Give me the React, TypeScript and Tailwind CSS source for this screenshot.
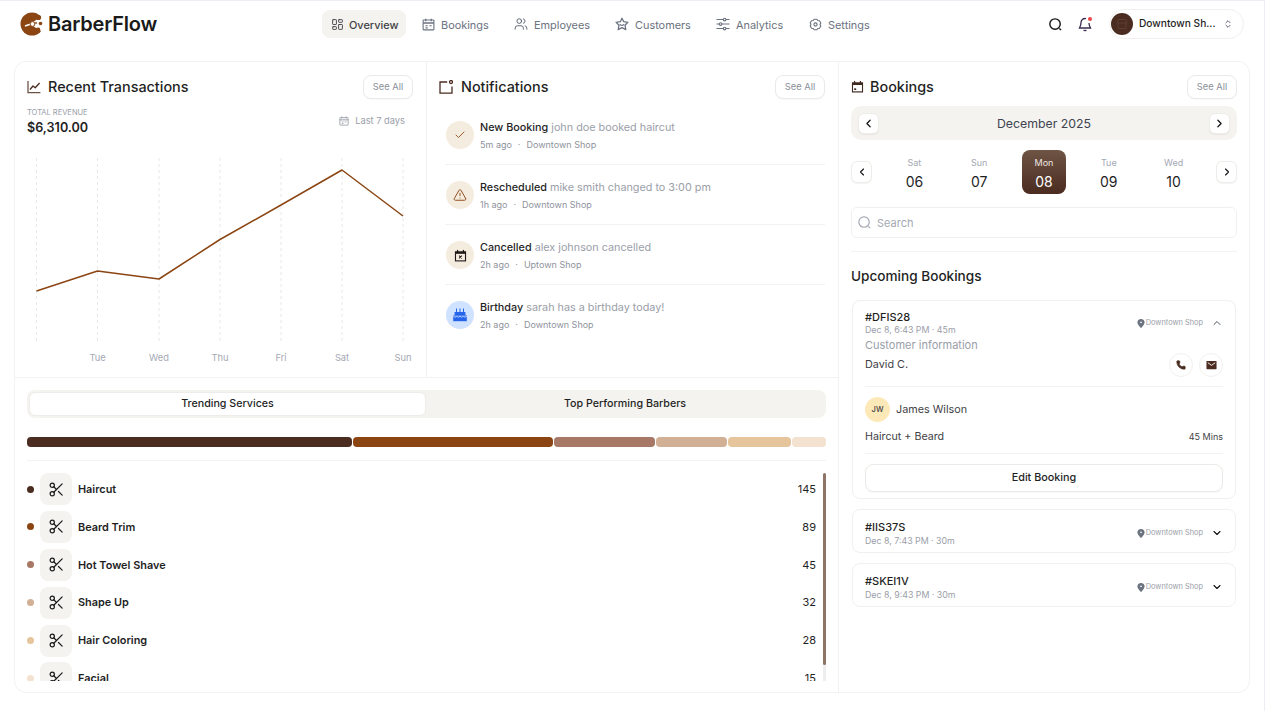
import { Check, ChevronDown, ChevronLeft, ChevronRight, ChevronUp, ChevronsUpDown, LayoutDashboard, Phone, Scissors, TriangleAlert, Users } from "lucide-react";
import type { ReactNode } from "react";

const font = { fontFamily: "Inter, 'Liberation Sans', sans-serif" };

function Logo() {
  return (
    <svg width="24" height="24" viewBox="0 0 24 24">
      <circle cx="12" cy="12" r="11.5" fill="#8b4513" />
      <path d="M24 3 L16 8 L10 12 L16 16 L24 21 Z" fill="#fff" />
      <path d="M5 14 L11 12" stroke="#fff" strokeWidth="1.6" />
      <circle cx="12.5" cy="12" r="2.4" fill="#fff" stroke="#8b4513" strokeWidth="1" />
      <circle cx="18.5" cy="5.5" r="2.6" fill="#8b4513" />
      <circle cx="20.5" cy="11.5" r="1.8" fill="#8b4513" />
      <circle cx="18" cy="18" r="2.4" fill="#8b4513" />
      <circle cx="16" cy="11" r="0.9" fill="#8b4513" />
    </svg>
  );
}

function SearchGlyph({ size = 13, width = 1.3 }: { size?: number; width?: number }) {
  return (
    <svg width={size} height={size} viewBox="0 0 14 14" fill="none" stroke="currentColor" strokeWidth={width} className="shrink-0">
      <circle cx="6.5" cy="6.5" r="5.6" />
      <path d="M11.2 11.2 12.9 12.9" />
    </svg>
  );
}

function CalendarLine({ size = 13 }: { size?: number }) {
  return (
    <svg width={size} height={size} viewBox="0 0 14 14" fill="none" stroke="currentColor" strokeWidth="1.2" className="shrink-0">
      <rect x="1.2" y="2.2" width="11.6" height="10.6" rx="0.6" />
      <path d="M1.2 5.4h11.6M4 .8v2.6M10 .8v2.6" strokeWidth="1.4" />
      <path d="M3.8 8.3h2.4M8 8.3h2.400M3.800 10.600h2.400" />
    </svg>
  );
}

function StarSmile() {
  return (
    <svg width="14" height="14" viewBox="0 0 14 14" fill="none" stroke="currentColor" strokeWidth="1.25" strokeLinejoin="round" className="shrink-0">
      <path d="M7 1.2 8.7 4.7 12.9 5.3 10 8.2 10.8 12.6 7 10.6 3.2 12.6 4 8.2 1.1 5.3 5.3 4.7Z" />
      <path d="M5.3 7.6c.8 1 2.6 1 3.4 0" strokeLinecap="round" />
    </svg>
  );
}

function Sliders() {
  return (
    <svg width="14" height="14" viewBox="0 0 14 14" fill="none" stroke="currentColor" strokeWidth="1.15" className="shrink-0">
      <path d="M.5 2.5h6.800M10 2.500h3.500M.5 7h2.800M6 7h7.500M.5 11.500h6.800M10 11.500h3.500" />
      <circle cx="8.6" cy="2.5" r="1.3" />
      <circle cx="4.6" cy="7" r="1.3" />
      <circle cx="8.6" cy="11.5" r="1.3" />
    </svg>
  );
}

function HexGear() {
  return (
    <svg width="13" height="13" viewBox="0 0 14 14" fill="none" stroke="currentColor" strokeWidth="1.2" strokeLinejoin="round" className="shrink-0">
      <path d="M5.5 1.3h3l1 1.400 1.800.2 1.400 2.400-.8 1.700.8 1.700-1.400 2.400-1.800.2-1 1.400h-3l-1-1.400-1.800-.2L1.300 8.700 2.100 7l-.8-1.700 1.400-2.400 1.800-.2Z" />
      <circle cx="7" cy="7" r="1.7" />
    </svg>
  );
}

function ChartIcon() {
  return (
    <svg width="14" height="14" viewBox="0 0 14 14" fill="none" strokeWidth="1.3">
      <path d="M1 1v11.600h12.400" stroke="#6b5346" />
      <path d="M3 9.500 6 6l2.200 1.800L12.600 3" stroke="#4a2c20" strokeLinejoin="round" />
    </svg>
  );
}

function NotifyIcon() {
  return (
    <svg width="14" height="14" viewBox="0 0 14 14" fill="none" stroke="#4a2c20" strokeWidth="1.3">
      <path d="M8.200 2H1v11.200h12V6.400" />
      <circle cx="12" cy="2" r="1.5" />
    </svg>
  );
}

function CalendarSolid() {
  return (
    <svg width="13" height="13" viewBox="0 0 14 14">
      <path d="M1 2.400h12v11H1z" fill="#3f2a20" />
      <rect x="3.2" y="1" width="1.3" height="2.4" fill="#3f2a20" />
      <rect x="9.5" y="1" width="1.3" height="2.4" fill="#3f2a20" />
      <rect x="2.2" y="5.4" width="9.6" height="6.8" fill="#fff" />
      <rect x="3.4" y="9" width="2.2" height="1.8" fill="#3f2a20" />
    </svg>
  );
}

function CalendarX() {
  return (
    <svg width="13" height="13" viewBox="0 0 14 14">
      <path d="M1 2.400h12v11H1z" fill="#1f1a17" />
      <rect x="3.2" y="1" width="1.3" height="2.4" fill="#1f1a17" />
      <rect x="9.5" y="1" width="1.3" height="2.4" fill="#1f1a17" />
      <rect x="2.2" y="5.2" width="9.6" height="7" fill="#f4ecdf" />
      <path d="M5.500 7.200l3 3M8.500 7.200l-3 3" stroke="#1f1a17" strokeWidth="1.1" />
    </svg>
  );
}

function Cake() {
  return (
    <svg width="16" height="16" viewBox="0 0 16 16" fill="#2563eb">
      <rect x="4" y="1.5" width="1" height="3.5" />
      <rect x="7.5" y="1.5" width="1" height="3.5" />
      <rect x="11" y="1.5" width="1" height="3.5" />
      <rect x="2.6" y="5" width="10.8" height="3.4" />
      <path d="M1.200 8.400h13.600v5.800H1.200z" />
      <path d="M1.200 9c1.300 1.600 2.300 1.600 3.400 0 1.100 1.600 2.300 1.600 3.400 0 1.100 1.600 2.300 1.600 3.400 0 1.100 1.600 2.300 1.600 3.400 0" fill="none" stroke="#cfe2ff" strokeWidth="0.9" />
    </svg>
  );
}

function Mail() {
  return (
    <svg width="11" height="10" viewBox="0 0 12 10">
      <rect x="0.5" y="0.5" width="11" height="9" rx="0.8" fill="#4a2c20" />
      <path d="M2 2.500 6 5.400 10 2.500" fill="none" stroke="#fff" strokeWidth="1" />
    </svg>
  );
}

function Pin() {
  return (
    <svg width="8" height="9" viewBox="0 0 8 10" fill="#6b7280">
      <path d="M4 0C1.600 0 0 1.600 0 3.800 0 6.200 4 10 4 10s4-3.800 4-6.200C8 1.600 6.400 0 4 0Z" />
      <circle cx="4" cy="3.8" r="0.9" fill="#fff" />
    </svg>
  );
}

function SeeAll() {
  return (
    <button className="w-[50px] h-6 rounded-lg border border-[#eceae6] bg-white text-[9.3px] text-[#8a8f98] shadow-[0_1px_1px_rgba(0,0,0,0.03)]">
      See All
    </button>
  );
}

function SmallBtn({ children, size }: { children: ReactNode; size: string }) {
  return (
    <button className={`${size} shrink-0 flex items-center justify-center rounded-md bg-white border border-[#eeece8] shadow-[0_1px_1px_rgba(0,0,0,0.05)] text-[#111111]`}>
      {children}
    </button>
  );
}

const nav: { label: string; icon: ReactNode; w: string }[] = [
  { label: "Bookings", icon: <CalendarLine />, w: "w-[92px]" },
  { label: "Employees", icon: <Users size={14} strokeWidth={1.5} color="#4b5563" className="shrink-0" />, w: "w-[101px]" },
  { label: "Customers", icon: <StarSmile />, w: "w-[101px]" },
  { label: "Analytics", icon: <Sliders />, w: "w-[93px]" },
  { label: "Settings", icon: <HexGear />, w: "w-[70px]" },
];

const notifications = [
  { title: "New Booking", body: "john doe booked haircut", time: "5m ago", shop: "Downtown Shop", bg: "bg-[#f4ecdf]", icon: <Check size={12} color="#8b4513" strokeWidth={1.7} /> },
  { title: "Rescheduled", body: "mike smith changed to 3:00 pm", time: "1h ago", shop: "Downtown Shop", bg: "bg-[#f4ecdf]", icon: <TriangleAlert size={14} color="#8b4513" strokeWidth={1.6} /> },
  { title: "Cancelled", body: "alex johnson cancelled", time: "2h ago", shop: "Uptown Shop", bg: "bg-[#f4ecdf]", icon: <CalendarX /> },
  { title: "Birthday", body: "sarah has a birthday today!", time: "2h ago", shop: "Downtown Shop", bg: "bg-[#cfe2ff]", icon: <Cake /> },
];

const services = [
  { name: "Haircut", count: 145, dot: "bg-[#4a2c20]" },
  { name: "Beard Trim", count: 89, dot: "bg-[#8b4513]" },
  { name: "Hot Towel Shave", count: 45, dot: "bg-[#a67865]" },
  { name: "Shape Up", count: 32, dot: "bg-[#d2b096]" },
  { name: "Hair Coloring", count: 28, dot: "bg-[#e6c59c]" },
  { name: "Facial", count: 15, dot: "bg-[#f3e2d0]" },
];

const segments = [
  "w-[325px] bg-[#4a2c20]",
  "w-[200px] bg-[#8b4513]",
  "w-[101px] bg-[#a67865]",
  "w-[71px] bg-[#d2b096]",
  "w-[63px] bg-[#e6c59c]",
  "flex-1 bg-[#f3e2d0]",
];

const days = [
  { d: "Sat", n: "06" },
  { d: "Sun", n: "07" },
  { d: "Mon", n: "08", active: true },
  { d: "Tue", n: "09" },
  { d: "Wed", n: "10" },
];

function Chart() {
  const xs = [36.5, 97.5, 159, 220, 281, 342, 403];
  const ys = [291, 271, 279, 239.5, 205, 170, 216];
  const labels = ["", "Tue", "Wed", "Thu", "Fri", "Sat", "Sun"];
  return (
    <svg width="411" height="220" viewBox="15 151 411 220" className="block" style={font}>
      {xs.map((x) => (
        <line key={x} x1={x} x2={x} y1="158" y2="342" stroke="#e8e8e8" strokeWidth="1" strokeDasharray="3 3" />
      ))}
      <polyline points={xs.map((x, i) => `${x},${ys[i]}`).join(" ")} fill="none" stroke="#8b4513" strokeWidth="1.5" strokeLinejoin="round" />
      {labels.map((l, i) => (
        <text key={i} x={xs[i]} y="361" textAnchor="middle" fontSize="9.3" fill="#a4a8b3">{l}</text>
      ))}
    </svg>
  );
}

function BookingRow({ id, time }: { id: string; time: string }) {
  return (
    <div className="h-[44px] rounded-lg border border-[#f1f0ee] flex items-center pl-[12px] pr-[12px] pt-[4px]">
      <div className="flex-1">
        <div className="text-[11px] leading-[14px] font-medium text-[#1f1f1f]">{id}</div>
        <div className="text-[8.8px] leading-[13px] text-[#9a9ea8]">{time}</div>
      </div>
      <Pin />
      <span className="ml-[1px] mr-[8px] text-[7.4px] text-[#9a9ea8]">Downtown Shop</span>
      <ChevronDown size={12} color="#111111" strokeWidth={2.2} />
    </div>
  );
}

export default function App() {
  return (
    <div className="w-[1265px] h-[711px] bg-white overflow-hidden border-t border-r border-[#eceef3] pl-[14px] pr-[14px]" style={font}>
      {/* Header */}
      <header className="h-[60px] flex items-start relative">
        <div className="flex items-center gap-1 w-[308px] mt-[11px] pl-[6px]">
          <Logo />
          <span className="text-[20px] leading-6 font-semibold text-[#1a1a1a] tracking-[-0.2px]">BarberFlow</span>
        </div>
        <nav className="flex items-center mt-[9px] text-[10.9px] leading-4 text-[#6b7280]">
          <div className="w-[84px] h-7 mr-[7px] rounded-lg bg-[#f5f3ef] flex items-center pl-[9px] gap-[5px] text-[#3f3f46] font-medium">
            <LayoutDashboard size={13} strokeWidth={1.7} className="shrink-0" />
            <span className="pt-px">Overview</span>
          </div>
          {nav.map((n) => (
            <div key={n.label} className={`${n.w} h-7 flex items-center pl-[9px] gap-[6px]`}>
              {n.icon}
              <span className="pt-px">{n.label}</span>
            </div>
          ))}
        </nav>
        <div className="ml-auto mr-[6px] mt-[8px] flex items-center">
          <span className="mr-[16px] text-[#111111]">
            <SearchGlyph size={13} width={1.5} />
          </span>
          <span className="relative mr-[17px] text-[#3b2b4f]">
            <svg width="14" height="15" viewBox="0 0 14 15" fill="none" stroke="currentColor" strokeWidth="1.3" className="block">
              <path d="M8 1.600C5 1 3 3 3 5.500c0 3-1 4.500-1.500 5.500h11C12 10 11 8.500 11 6" />
              <path d="M5.500 13.500h3" />
            </svg>
            <span className="absolute top-0 right-0 w-[4px] h-[4px] rounded-full bg-[#ef4444]" />
          </span>
          <div className="w-[135px] h-[30px] rounded-full border border-[#f1f0ee] flex items-center pl-[1px] pr-[10px]">
            <span className="w-[22px] h-[22px] rounded-full bg-[#4a2c20] shrink-0 flex items-center justify-center">
              <svg width="12" height="12" viewBox="0 0 12 12" fill="none" stroke="#5d3d2e" strokeWidth="1">
                <path d="M2 1.500h8L11 5H1ZM2 5v5.500h8V5" />
              </svg>
            </span>
            <span className="ml-[6px] flex-1 whitespace-nowrap text-[10.2px] font-medium text-[#1f1f1f]">Downtown Sh...</span>
            <ChevronsUpDown size={10} color="#3b2b4f" strokeWidth={1.8} />
          </div>
        </div>
      </header>

      {/* Main card */}
      <div className="w-[1236px] h-[632px] rounded-xl border border-[#f2f2f0] flex overflow-hidden">
        <div className="w-[824px] border-r border-[#f2f2f0] flex flex-col">
          <div className="h-[316px] flex border-b border-[#f2f2f0]">
            {/* Transactions */}
            <section className="w-[412px] border-r border-[#f2f2f0] relative">
              <div className="flex items-center justify-between pl-[12px] pr-[13px] pt-[13px]">
                <div className="flex items-center gap-[7px] text-[14.4px] font-medium text-[#1f1f1f]">
                  <ChartIcon />
                  Recent Transactions
                </div>
                <SeeAll />
              </div>
              <div className="flex justify-between pl-[12px] pr-[21px] mt-[9px]">
                <div>
                  <div className="text-[7.5px] leading-[10px] text-[#9a9ea8]">TOTAL REVENUE</div>
                  <div className="mt-px text-[12.6px] leading-[18px] font-semibold text-[#1f1f1f]">$6,310.00</div>
                </div>
                <div className="flex items-center gap-[6px] h-[14px] mt-[6px] text-[9.3px] text-[#9a9ea8]">
                  <CalendarLine size={10} />
                  Last 7 days
                </div>
              </div>
              <div className="absolute left-0 top-[89px]">
                <Chart />
              </div>
            </section>

            {/* Notifications */}
            <section className="flex-1 pl-[12px] pr-[13px]">
              <div className="flex items-center justify-between pt-[13px]">
                <div className="flex items-center gap-[8px] text-[14.4px] font-medium text-[#1f1f1f]">
                  <NotifyIcon />
                  Notifications
                </div>
                <SeeAll />
              </div>
              <div className="mt-[6px]">
                {notifications.map((n, i) => (
                  <div key={n.title} className={`h-[60px] ml-[6px] flex items-start pl-px pt-[16px] ${i < 3 ? "border-b border-[#f2f2f0]" : ""}`}>
                    <span className={`w-7 h-7 rounded-full ${n.bg} flex items-center justify-center shrink-0`}>{n.icon}</span>
                    <div className="ml-[6px]">
                      <div className="text-[10.8px] leading-[14px] text-[#9a9ea8]">
                        <span className="font-medium text-[#1f1f1f]">{n.title}</span> {n.body}
                      </div>
                      <div className="mt-[4px] text-[9px] leading-[12px] text-[#8f939d]">
                        {n.time}
                        <span className="mx-[6px]">·</span>
                        {n.shop}
                      </div>
                    </div>
                  </div>
                ))}
              </div>
            </section>
          </div>

          {/* Services */}
          <section className="flex-1 px-[12px] pt-[12px] min-h-0 flex flex-col">
            <div className="h-7 rounded-lg bg-[#f5f3ef] p-[2px] flex text-[10.7px] text-[#1f1f1f] font-medium shrink-0">
              <div className="w-[397px] rounded-md bg-white border border-[#eeece8] flex items-center justify-center pt-px">Trending Services</div>
              <div className="flex-1 flex items-center justify-center pt-px">Top Performing Barbers</div>
            </div>
            <div className="h-[10px] mt-[19px] flex gap-[1px] shrink-0">
              {segments.map((s) => (
                <div key={s} className={`${s} rounded-[4px]`} />
              ))}
            </div>
            <div className="h-px bg-[#f2f2f0] mt-[13px] shrink-0" />
            <div className="relative mt-[12px] h-[208px] overflow-hidden">
              <div className="flex flex-col gap-[5.9px]">
                {services.map((s) => (
                  <div key={s.name} className="flex items-center h-[32px] shrink-0">
                    <span className={`w-[7px] h-[7px] rounded-full ${s.dot}`} />
                    <span className="ml-[6px] w-[32px] h-[32px] rounded-lg bg-[#f5f3ef] flex items-center justify-center">
                      <Scissors size={17} color="#1a1a1a" strokeWidth={1.7} />
                    </span>
                    <span className="ml-[6px] flex-1 text-[10.9px] font-semibold text-[#1f1f1f]">{s.name}</span>
                    <span className="mr-[10px] text-[11px] text-[#1f1f1f]">{s.count}</span>
                  </div>
                ))}
              </div>
              <div className="absolute right-0 top-0 w-[3px] h-full bg-[#eeeeee]">
                <div className="h-[192px] rounded-full bg-[#8d7568]" />
              </div>
            </div>
          </section>
        </div>

        {/* Bookings */}
        <section className="flex-1 px-[12px]">
          <div className="flex items-center justify-between pt-[13px]">
            <div className="flex items-center gap-[6px] text-[14.4px] font-medium text-[#1f1f1f]">
              <CalendarSolid />
              Bookings
            </div>
            <SeeAll />
          </div>
          <div className="mt-[7px] h-[34px] rounded-[10px] bg-[#f5f3ef] flex items-center justify-between px-[7px]">
            <SmallBtn size="w-[21px] h-[21px]"><ChevronLeft size={13} strokeWidth={2.2} /></SmallBtn>
            <span className="text-[12.3px] pt-[2px] text-[#3f4450]">December 2025</span>
            <SmallBtn size="w-[21px] h-[21px]"><ChevronRight size={13} strokeWidth={2.2} /></SmallBtn>
          </div>
          <div className="mt-[10px] h-[44px] flex items-center">
            <SmallBtn size="w-[21px] h-[22px]"><ChevronLeft size={12} strokeWidth={2.2} /></SmallBtn>
            <div className="flex-1 grid grid-cols-5 px-[10px]">
              {days.map((d) => (
                <div key={d.n} className="flex justify-center">
                  <div className={`w-[44px] h-[44px] rounded-lg flex flex-col items-center pt-[6px] ${d.active ? "bg-gradient-to-b from-[#6f5546] to-[#4a2c20] text-white" : "text-[#1f1f1f]"}`}>
                    <span className={`text-[9px] leading-[13px] ${d.active ? "text-[#efe7e2]" : "text-[#a4a8b3]"}`}>{d.d}</span>
                    <span className="mt-[3px] text-[14px] leading-[20px]">{d.n}</span>
                  </div>
                </div>
              ))}
            </div>
            <SmallBtn size="w-[21px] h-[22px]"><ChevronRight size={12} strokeWidth={2.2} /></SmallBtn>
          </div>
          <div className="mt-[13px] h-[31px] rounded-md border border-[#f1f0ee] flex items-center pl-[6px] gap-[6px] text-[11px] text-[#a4a8b3]">
            <SearchGlyph size={13} />
            <span className="pt-px">Search</span>
          </div>
          <div className="h-px bg-[#f2f2f0] mt-[13px]" />
          <h2 className="mt-[14px] text-[13.6px] leading-[20px] font-medium text-[#1f1f1f]">Upcoming Bookings</h2>

          <div className="mt-[14px] mx-px h-[199px] rounded-lg border border-[#f1f0ee] px-[12px] pt-[9px]">
            <div className="flex items-center">
              <div className="flex-1">
                <div className="text-[11px] leading-[14px] font-medium text-[#1f1f1f]">#DFIS28</div>
                <div className="text-[8.8px] leading-[12px] text-[#9a9ea8]">Dec 8, 6:43 PM · 45m</div>
              </div>
              <Pin />
              <span className="ml-[1px] mr-[8px] text-[7.4px] text-[#9a9ea8]">Downtown Shop</span>
              <ChevronUp size={12} color="#4b5563" strokeWidth={2} />
            </div>
            <div className="mt-[2px] text-[11px] leading-[14px] text-[#9a9ea8]">Customer information</div>
            <div className="mt-[1px] flex items-center justify-between">
              <span className="pt-px text-[10.8px] text-[#3f3f46]">David C.</span>
              <div className="flex gap-[6px]">
                <span className="w-6 h-6 rounded-full border border-[#f1f0ee] flex items-center justify-center">
                  <Phone size={10} color="#4a2c20" fill="#4a2c20" />
                </span>
                <span className="w-6 h-6 rounded-full border border-[#f1f0ee] flex items-center justify-center">
                  <Mail />
                </span>
              </div>
            </div>
            <div className="h-px bg-[#f2f2f0] mt-[9px]" />
            <div className="mt-[10px] flex items-center gap-[6px]">
              <span className="w-[25px] h-[25px] rounded-full bg-[#fde8b8] flex items-center justify-center text-[7.5px] font-medium text-[#3f3f46]">JW</span>
              <span className="pt-px text-[10.8px] text-[#3f3f46]">James Wilson</span>
            </div>
            <div className="mt-[7px] flex items-center justify-between text-[#3f3f46]">
              <span className="text-[10.7px] leading-[16px]">Haircut + Beard</span>
              <span className="text-[9px]">45 Mins</span>
            </div>
            <div className="h-px bg-[#f2f2f0] mt-[8px]" />
            <button className="mt-[10px] pt-px w-full h-7 rounded-lg border border-[#eceae6] text-[10.8px] font-medium text-[#1f1f1f] shadow-[0_1px_1px_rgba(0,0,0,0.03)]">
              Edit Booking
            </button>
          </div>
          <div className="mt-[10px] mx-px flex flex-col gap-[10px]">
            <BookingRow id="#IIS37S" time="Dec 8, 7:43 PM · 30m" />
            <BookingRow id="#SKEI1V" time="Dec 8, 9:43 PM · 30m" />
          </div>
        </section>
      </div>
    </div>
  );
}
